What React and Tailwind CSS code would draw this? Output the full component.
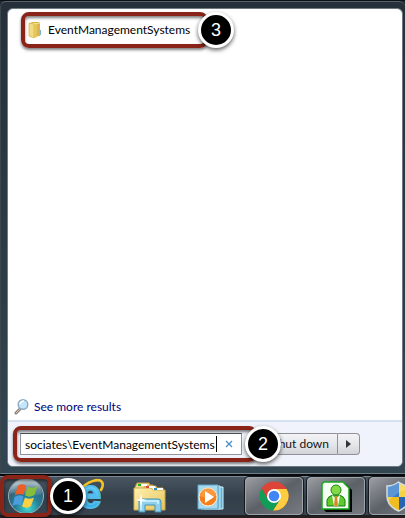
import React, { useState } from "react";

const taskbarButton =
  "w-[58px] h-[38px] shrink-0 flex items-center justify-center rounded-sm border border-[#a0a4aa] bg-linear-to-br from-[#9b9ea3] via-[#5c6168] to-[#777b81] shadow-[0_0_0_1px_#15191e]";

export default function App() {
  const [query, setQuery] = useState("sociates\\EventManagementSystems");

  return (
    <div className="min-h-screen flex flex-col overflow-hidden bg-[#202a33] font-['Lato','Open_Sans',sans-serif] text-xs text-black">
      <main className="grow flex flex-col border-t border-[#0c1116]">
        <div className="grow flex flex-col pl-1.5 pr-0.5 pt-1.5 pb-1.5 rounded-t-md bg-linear-to-b from-[#25303a] to-[#324651] border-l border-l-[#3c464f] border-t border-t-[#58626b] border-b border-b-[#717c84]">
          <div className="grow flex flex-col rounded-md border border-[#707a82] bg-white overflow-hidden">
            <section className="grow flex flex-col justify-between">
              <div className="pl-[19px] pt-[9px]">
                <a
                  href="#folder"
                  className="relative w-[175px] h-6 flex items-center gap-[5px]"
                >
                  <FolderIcon />
                  <span>EventManagementSystems</span>
                  <Highlight className="-inset-1.5" />
                  <Badge number="3" className="-right-8 -top-1.5" />
                </a>
              </div>
              <a
                href="#results"
                className="flex items-center gap-1 px-1.5 pb-1 text-[#00007a]"
              >
                <SearchIcon />
                <span>See more results</span>
              </a>
            </section>

            <footer className="h-[46px] flex items-center pl-3 bg-[#f0f3fb] border-t-2 border-[#d5e1ef]">
              <div className="relative w-[222px] h-[22px] flex items-center bg-white border border-[#8f959b] border-t-[#505458] pl-1">
                <input
                  aria-label="Search programs and files"
                  value={query}
                  onChange={(e) => setQuery(e.target.value)}
                  className="w-[191px] h-5 bg-transparent outline-none"
                />
                <span className="w-px h-4 bg-black" />
                <button
                  aria-label="Clear search"
                  onClick={() => setQuery("")}
                  className="grow h-5 flex items-center justify-center"
                >
                  <svg width="8" height="8" viewBox="0 0 8 8">
                    <path
                      d="M1 1l6 6M7 1L1 7"
                      stroke="#4d8ec3"
                      strokeWidth="1.3"
                    />
                  </svg>
                </button>
                <Highlight className="-left-2 -right-4 -inset-y-2" />
                <Badge number="2" className="-right-10 -top-2" />
              </div>
              <button className="ml-6 w-[72px] h-[22px] pr-2 text-right whitespace-nowrap border border-[#8e9298] rounded-l-sm bg-linear-to-b from-[#f4f4f6] via-[#e6e7ea] to-[#d2d4d8] text-[#151515]">
                Shut down
              </button>
              <button
                aria-label="More options"
                className="w-[22px] h-[22px] flex items-center justify-center border border-l-0 border-[#8e9298] rounded-r-sm bg-linear-to-b from-[#f4f4f6] via-[#e6e7ea] to-[#d2d4d8]"
              >
                <svg width="5" height="8" viewBox="0 0 5 8">
                  <path d="M0 0l5 4-5 4z" fill="#333" />
                </svg>
              </button>
            </footer>
          </div>
        </div>
      </main>

      <nav className="h-11 flex items-start pt-0.5 border-t-2 border-[#070b0f] bg-linear-to-b from-[#4b5762] via-[#323e48] to-[#394550] shadow-[inset_0_1px_0_#7c8790,inset_0_-3px_0_#241f1f]">
        <button
          aria-label="Start"
          className="relative ml-1.5 w-10 h-9 shrink-0 flex items-center justify-center"
        >
          <StartIcon />
          <Highlight className="-inset-x-1.5 -inset-y-[3px]" />
          <Badge number="1" className="-right-10" />
        </button>
        <button
          aria-label="Internet Explorer"
          className="ml-[25px] w-9 h-9 shrink-0 flex items-center justify-center"
        >
          <ExplorerIcon />
        </button>
        <button
          aria-label="File Explorer"
          className="ml-[26px] w-[34px] h-10 shrink-0 flex items-center justify-center"
        >
          <FilesIcon />
        </button>
        <button
          aria-label="Media Player"
          className="ml-7 w-8 h-10 shrink-0 flex items-center justify-center"
        >
          <MediaIcon />
        </button>
        <div className="ml-[18px] -mt-0.5 pt-px flex gap-1 shrink-0">
          <button aria-label="Chrome" className={taskbarButton}>
            <ChromeIcon />
          </button>
          <button aria-label="Contacts" className={taskbarButton}>
            <PersonIcon />
          </button>
          <button aria-label="Security" className={taskbarButton}>
            <ShieldIcon />
          </button>
        </div>
      </nav>
    </div>
  );
}

function Highlight({ className }) {
  return (
    <span
      className={`pointer-events-none absolute rounded-lg border-4 border-[#8a2419] shadow-[0_2px_3px_#00000080,inset_0_2px_3px_#00000080] ${className}`}
    />
  );
}

function Badge({ number, className }) {
  return (
    <span
      className={`pointer-events-none absolute z-10 w-9 h-9 flex items-center justify-center rounded-full border-3 border-white bg-black text-white text-lg leading-none font-['Liberation_Sans',sans-serif] shadow-[0_2px_4px_#000000a0] ${className}`}
    >
      {number}
    </span>
  );
}

function FolderIcon() {
  return (
    <svg width="16" height="18" viewBox="0 0 16 18" className="shrink-0">
      <path d="M2 3l3-2h7l1 2v12l-9 1-2-2z" fill="#d9b545" />
      <path d="M5 2h7v12l-6 2z" fill="#f3dc83" />
      <path d="M2 2l5 1v14l-5-2z" fill="#f3dc83" stroke="#ccaa3d" strokeWidth=".6" />
      <path d="M7 4l3-1v13l-3 1z" fill="#e6c55a" />
      <path d="M10 3h3v12h-3z" fill="#d8b84e" />
      <path d="M13 9h1v5h-1z" fill="#72b1d8" />
    </svg>
  );
}

function SearchIcon() {
  return (
    <svg width="16" height="18" viewBox="0 0 16 18" className="shrink-0">
      <path d="M6 11l-4 4" stroke="#8b8177" strokeWidth="3" strokeLinecap="round" />
      <path d="M6 11l-4 4" stroke="#d1c9bd" strokeWidth="1" />
      <circle cx="9" cy="6.5" r="4.8" fill="#c4e5fb" stroke="#8eaac2" strokeWidth="1.4" />
      <path d="M6 6q1-3 4-3" stroke="#fff" strokeWidth="1.5" fill="none" />
    </svg>
  );
}

function StartIcon() {
  return (
    <svg width="38" height="38" viewBox="0 0 38 38" className="shrink-0">
      <defs>
        <radialGradient id="orb" cx=".55" cy=".85" r=".85">
          <stop offset="0" stopColor="#42d8d0" />
          <stop offset=".4" stopColor="#247f98" />
          <stop offset=".75" stopColor="#32627b" />
          <stop offset="1" stopColor="#8eaab5" />
        </radialGradient>
        <linearGradient id="orbShine" x2="0" y2="1">
          <stop stopColor="#fff" stopOpacity=".6" />
          <stop offset="1" stopColor="#fff" stopOpacity=".08" />
        </linearGradient>
      </defs>
      <circle cx="19" cy="19" r="17.5" fill="url(#orb)" stroke="#9cb3ba" />
      <path d="M3 17a16 15 0 0 1 32 0q-8 3-16 0t-16 0z" fill="url(#orbShine)" />
      <path d="M10.5 9q4-3 8.500-.5l-2.500 9.500q-4-2-9 .5 2-4 3-9.500z" fill="#ec5d28" />
      <path d="M20.500 9.500q4 3 10-.5l-3 9q-5 3-9.500.5z" fill="#87bd3b" />
      <path d="M7.500 20q4.500-3 9-.5l-2.500 9q-4-2-9 .5 2-4 2.500-9z" fill="#4b9ddd" />
      <path d="M18 20.500q4 2.500 9 0l-3 8.500q-4 3-9 .5z" fill="#fbd045" />
    </svg>
  );
}

function ExplorerIcon() {
  return (
    <svg width="36" height="36" viewBox="0 0 36 36" className="shrink-0 overflow-visible">
      <defs>
        <linearGradient id="ieBlue" x2="0" y2="1">
          <stop stopColor="#8be7ff" />
          <stop offset="1" stopColor="#239ee3" />
        </linearGradient>
      </defs>
      <text
        x="8"
        y="30"
        fontFamily="Liberation Sans"
        fontWeight="bold"
        fontSize="40"
        fill="url(#ieBlue)"
        stroke="#4fbceb"
        strokeWidth="2"
      >
        e
      </text>
      <path
        d="M9 12C16 3 28 0 31 4q2 3-1 8"
        fill="none"
        stroke="#f5c325"
        strokeWidth="2.6"
        strokeLinecap="round"
      />
    </svg>
  );
}

function FilesIcon() {
  return (
    <svg width="34" height="32" viewBox="0 0 34 32" className="shrink-0">
      <defs>
        <linearGradient id="files" x2="1" y2="1">
          <stop stopColor="#fff1b0" />
          <stop offset="1" stopColor="#e6c35a" />
        </linearGradient>
      </defs>
      <path d="M3 3l1-2h12l1 2h3v24H2V6z" fill="#f2da86" stroke="#bd9b45" />
      <path d="M11 6l1-2h11l1 2h6v21H11z" fill="#f5df91" stroke="#c6a34c" />
      <path d="M1 6h17l2 2h12v20H1z" fill="url(#files)" stroke="#cbaa51" />
      <path d="M5 2h9v2H5z" fill="#fff" />
      <path d="M5 2h3v2H5z" fill="#16b516" />
      <path d="M13 4h9v2h-9z" fill="#fff" />
      <path d="M13 4h3v2h-3z" fill="#db4935" />
      <path d="M20 6h10v2H20z" fill="#fff" />
      <path d="M21 6h3v2h-3z" fill="#218fd4" />
      <path
        d="M6 30V19q0-2 2-2h17q3 0 3 3v10h-6v-7H12v7z"
        fill="#90d0ec"
        stroke="#3e93b8"
      />
      <path d="M8 28v-9h17v3" fill="none" stroke="#d4f5ff" strokeWidth="1.5" />
      <path d="M8 11l1 6 5 1-5 1-1 6-1-6-5-1 5-1z" fill="#fff" />
    </svg>
  );
}

function MediaIcon() {
  return (
    <svg width="28" height="28" viewBox="0 0 28 28" className="shrink-0">
      <path d="M7 3h19v22H7z" fill="#5bafd9" stroke="#ddf4fb" />
      <path d="M4 2h19v23H4z" fill="#7bc2df" stroke="#caeaf6" />
      <path d="M1 1h20v24H1z" fill="#a7d8eb" stroke="#5aa7ce" />
      <circle cx="11" cy="13" r="9" fill="#f57f1c" stroke="#fff0d8" />
      <path d="M3 12a8 8 0 0 1 16 0q-8 3-16 0z" fill="#ffb25f" opacity=".5" />
      <path d="M8 7l9 6-9 6z" fill="#fff" />
    </svg>
  );
}

function ChromeIcon() {
  return (
    <svg width="30" height="30" viewBox="0 0 30 30" className="shrink-0">
      <circle cx="15" cy="15" r="14.5" fill="#db4437" />
      <path d="M15 8h12.700a14.500 14.500 0 0 1-13.700 21.500l7-11z" fill="#ffcd40" />
      <path d="M2.700 7.300A14.500 14.500 0 0 0 14 29.500l7-11H9z" fill="#0f9d58" />
      <circle cx="15" cy="15" r="7" fill="#fff" />
      <circle cx="15" cy="15" r="5.3" fill="#4285f4" />
    </svg>
  );
}

function PersonIcon() {
  return (
    <svg width="31" height="31" viewBox="0 0 31 31" className="shrink-0">
      <path d="M3 3h22l6 6v22H5l-2-2z" fill="#050505" />
      <path d="M3 1h19l6 6v21H1V3z" fill="#f7fff4" stroke="#16a61b" strokeWidth="1.5" />
      <path
        d="M6 25v-6q1-4 6-5h6q5 1 6 5v6z"
        fill="#62ca2b"
        stroke="#137e17"
      />
      <circle cx="15" cy="9" r="5" fill="#83d944" stroke="#168718" />
      <path d="M11 14l4 4 4-4-2 11h-4z" fill="#fff" />
      <path d="M14 15h2l1 9-2 2-2-2z" fill="#d38b27" />
    </svg>
  );
}

function ShieldIcon() {
  return (
    <svg width="27" height="31" viewBox="0 0 27 31" className="shrink-0">
      <defs>
        <clipPath id="shieldShape">
          <path d="M13.5 1Q8 5 2 5v10q0 10 11.5 15Q25 25 25 15V5q-6 0-11.5-4z" />
        </clipPath>
      </defs>
      <g clipPath="url(#shieldShape)">
        <path d="M0 0h14v16H0z" fill="#347cc7" />
        <path d="M14 0h13v16H14z" fill="#f7d243" />
        <path d="M0 16h14v15H0z" fill="#efbd20" />
        <path d="M14 16h13v15H14z" fill="#2765b4" />
        <path d="M0 0h27v8Q14 8 3 21H0z" fill="#fff" opacity=".2" />
      </g>
      <path
        d="M13.5 1Q8 5 2 5v10q0 10 11.5 15Q25 25 25 15V5q-6 0-11.5-4z"
        fill="none"
        stroke="#d3dce3"
        strokeWidth="1.5"
      />
    </svg>
  );
}
